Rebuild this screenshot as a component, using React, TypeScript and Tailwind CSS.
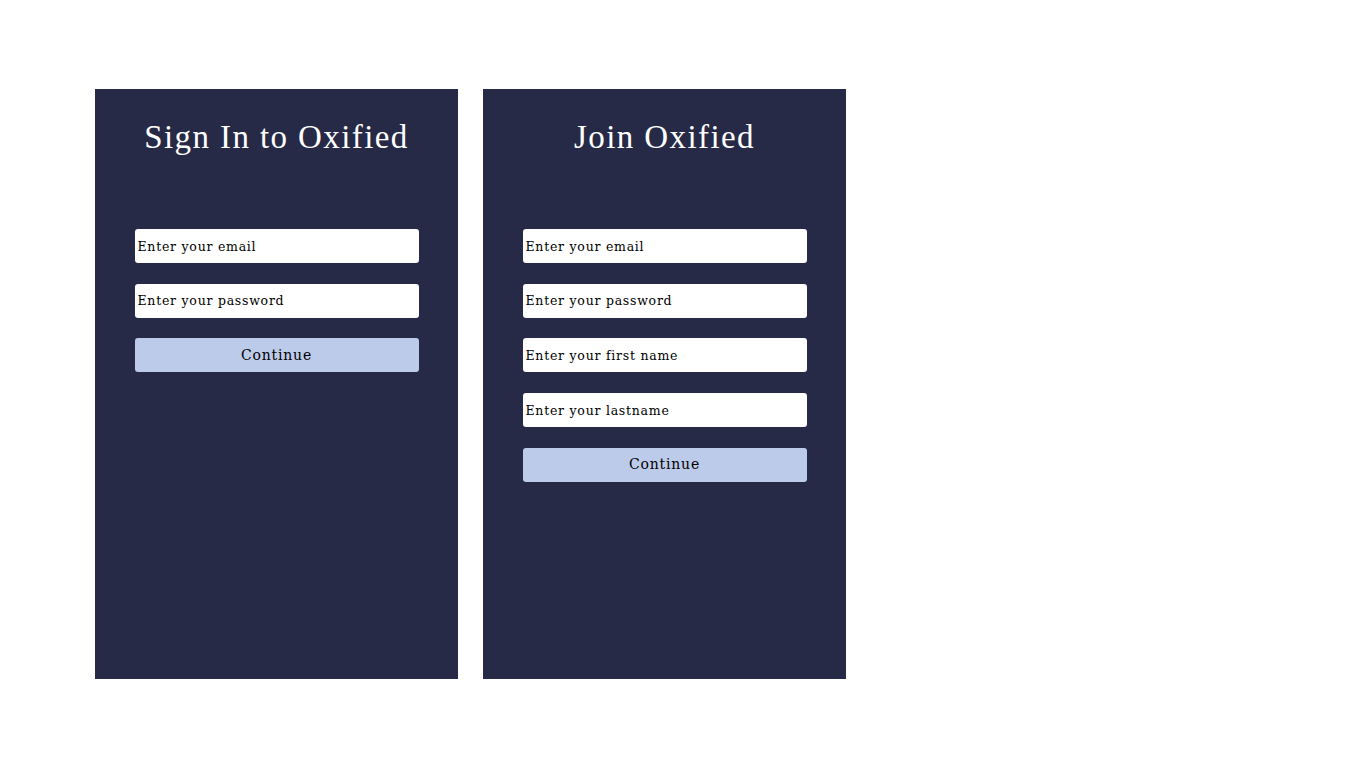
import React from 'react';

const panel = 'w-[363px] h-[590px] bg-[#262a47] flex flex-col items-center';
const field =
  'w-full h-[34px] bg-white rounded-[3px] px-[3px] text-[12.5px] tracking-[0.75px] text-black placeholder:text-black outline-none font-["DejaVu_Serif",serif]';
const button =
  'w-full h-[34px] bg-[#bdcbeb] rounded-[3px] text-[14px] tracking-[0.8px] text-black font-["DejaVu_Serif",serif]';

function Title({ children }: { children: React.ReactNode }) {
  return (
    <h1 className='mt-[28px] h-[40px] text-white text-[33px] leading-[40px] tracking-[1.4px] font-["Liberation_Serif",serif]'>
      {children}
    </h1>
  );
}

export default function App() {
  return (
    <div className="min-h-screen bg-white pt-[89px] pl-[95px] flex gap-[25px]">
      <div className={panel}>
        <Title>Sign In to Oxified</Title>
        <form className="w-[284px] mt-[72px] flex flex-col gap-[20.7px]">
          <input className={field} placeholder="Enter your email" />
          <input className={field} type="password" placeholder="Enter your password" />
          <button type="button" className={button}>Continue</button>
        </form>
      </div>

      <div className={panel}>
        <Title>Join Oxified</Title>
        <form className="w-[284px] mt-[72px] flex flex-col gap-[20.7px]">
          <input className={field} placeholder="Enter your email" />
          <input className={field} type="password" placeholder="Enter your password" />
          <input className={field} placeholder="Enter your first name" />
          <input className={field} placeholder="Enter your lastname" />
          <button type="button" className={button}>Continue</button>
        </form>
      </div>
    </div>
  );
}
